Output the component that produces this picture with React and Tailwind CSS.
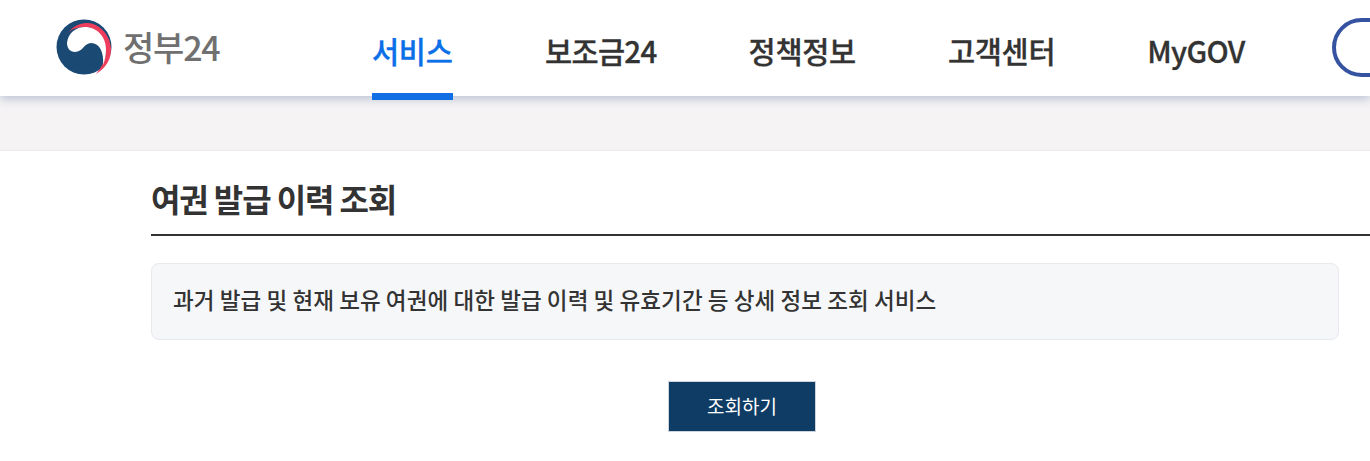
const menus = [
  { label: '서비스', active: true, width: 'w-[81px] tracking-[-0.3px]' },
  { label: '보조금24', width: 'tracking-[-0.7px]' },
  { label: '정책정보', width: 'tracking-[-0.3px]' },
  { label: '고객센터', width: 'tracking-[-0.3px]' },
  { label: 'MyGOV', width: 'tracking-[-0.7px]' },
];

const Logo = () => (
  <svg width="56" height="56" viewBox="0 0 56 56" className="shrink-0">
    <circle cx="28" cy="28" r="27.5" fill="#1a4a74" />
    <path d="M11 15C16 8 24 3.500 32 4C44 5 54 16 55 29C55.500 40 50 49 40 55C46 48 50 40 50 31C49 19 40 8 29 8C21 8 15 10 11 15Z" fill="#ee3e5c" />
    <path d="M11 24C12 14 20 8 29 8C41 8 50 18 50 30C50 36 49 41 47 46C48 34 44 24 35 24C28 24 27 33 19 33C14 33 11 29 11 24Z" fill="#ffffff" />
  </svg>
);

const App = () => {
  return (
    <div className="w-[1370px] h-[461px] overflow-hidden bg-white text-[#333] font-['Noto_Sans_CJK_KR','Noto_Sans',sans-serif]">
      {/* Header */}
      <header className="relative z-10 h-[96px] flex items-start bg-white pl-[56px] shadow-[0_3px_9px_rgba(175,186,208,0.85)]">
        <div className="w-[316px] h-[96px] shrink-0 pt-[19px] flex items-start gap-[11px]">
          <Logo />
          <span className="text-[34px] leading-[56px] font-medium text-[#707070] tracking-[-1.2px]">정부24</span>
        </div>
        <nav className="flex gap-[92px]">
          {menus.map((menu) => (
            <a
              key={menu.label}
              className={`h-[100px] pt-[28px] text-[29.5px] leading-[44px] font-medium whitespace-nowrap [-webkit-text-stroke:0.3px] ${menu.width} ${
                menu.active
                  ? 'text-[#0b6fe8] border-b-[7px] border-[#0f6fe3]'
                  : 'text-[#333]'
              }`}
            >
              {menu.label}
            </a>
          ))}
        </nav>
        <button className="ml-[88px] mt-[18px] w-[200px] h-[59px] shrink-0 rounded-full border-4 border-[#3553a1] bg-white"></button>
      </header>

      {/* Sub bar */}
      <div className="h-[55px] bg-[#f5f3f4] border-b border-[#ebebeb]"></div>

      {/* Content */}
      <main className="pl-[151px]">
        <h1 className="h-[85px] pt-[24px] text-[32px] leading-[46px] font-bold tracking-[-1.1px] text-[#333] border-b-2 border-[#333] -mr-[10px]">
          여권 발급 이력 조회
        </h1>
        <div className="mt-[27px] w-[1188px] h-[77px] flex items-center px-[21px] pb-[4px] rounded-lg border border-[#e8e9ed] bg-[#f6f7f9]">
          <p className="text-[22.5px] font-medium text-[#333] whitespace-nowrap tracking-[0.09px]">
            과거 발급 및 현재 보유 여권에 대한 발급 이력 및 유효기간 등 상세 정보 조회 서비스
          </p>
        </div>
        <button className="block mt-[41px] ml-[517px] w-[148px] h-[51px] border border-[#ccd3dc] bg-[#0f3c64] text-[19px] text-white">
          조회하기
        </button>
      </main>
    </div>
  );
};

export default App;
